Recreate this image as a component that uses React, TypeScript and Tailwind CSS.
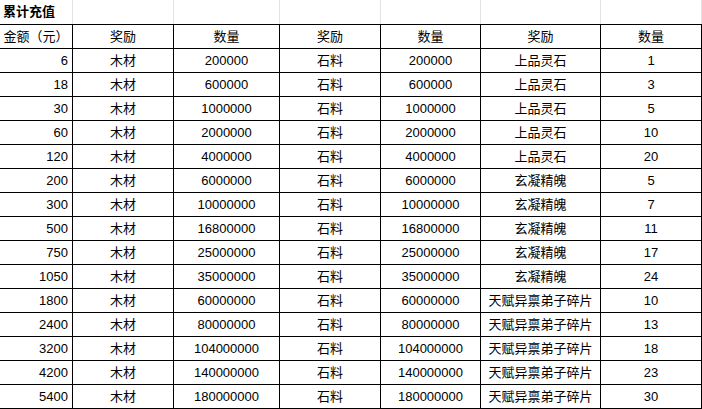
const rows: [number, string, string][] = [
  [6, "200000", "上品灵石"],
  [18, "600000", "上品灵石"],
  [30, "1000000", "上品灵石"],
  [60, "2000000", "上品灵石"],
  [120, "4000000", "上品灵石"],
  [200, "6000000", "玄凝精魄"],
  [300, "10000000", "玄凝精魄"],
  [500, "16800000", "玄凝精魄"],
  [750, "25000000", "玄凝精魄"],
  [1050, "35000000", "玄凝精魄"],
  [1800, "60000000", "天赋异禀弟子碎片"],
  [2400, "80000000", "天赋异禀弟子碎片"],
  [3200, "104000000", "天赋异禀弟子碎片"],
  [4200, "140000000", "天赋异禀弟子碎片"],
  [5400, "180000000", "天赋异禀弟子碎片"],
];

const counts = [1, 3, 5, 10, 20, 5, 7, 11, 17, 24, 10, 13, 18, 23, 30];

const gridCols = "grid grid-cols-[73px_101px_106px_101px_100px_120px_101px]";
const cell = "h-[24px] flex items-center justify-center border-r border-b border-black whitespace-nowrap";

function Cell({ children, right }: { children?: React.ReactNode; right?: boolean }) {
  return (
    <div className={right ? cell + " justify-end pr-[4px]" : cell}>{children}</div>
  );
}

export default function App() {
  return (
    <div
      className="w-[702px] h-[409px] bg-white text-black text-[13px] overflow-hidden"
      style={{ fontFamily: '"Liberation Sans", "Noto Sans CJK SC", sans-serif' }}
    >
      <div className={gridCols + " h-[25px] border-b border-black"}>
        <div className="flex items-center pl-[3px] font-bold text-[13px] border-r border-[#e2e3e3]">累计充值</div>
        <div className="border-r border-[#e2e3e3]" />
        <div className="border-r border-[#e2e3e3]" />
        <div className="border-r border-[#e2e3e3]" />
        <div className="border-r border-[#e2e3e3]" />
        <div className="border-r border-[#e2e3e3]" />
        <div className="border-r border-[#e2e3e3]" />
      </div>
      <div className={gridCols}>
        <Cell>金额（元）</Cell>
        <Cell>奖励</Cell>
        <Cell>数量</Cell>
        <Cell>奖励</Cell>
        <Cell>数量</Cell>
        <Cell>奖励</Cell>
        <Cell>数量</Cell>
        {rows.map(([amt, qty, item], i) => (
          <div key={amt} className="contents">
            <Cell right>{amt}</Cell>
            <Cell>木材</Cell>
            <Cell>{qty}</Cell>
            <Cell>石料</Cell>
            <Cell>{qty}</Cell>
            <Cell>{item}</Cell>
            <Cell>{counts[i]}</Cell>
          </div>
        ))}
      </div>
    </div>
  );
}
